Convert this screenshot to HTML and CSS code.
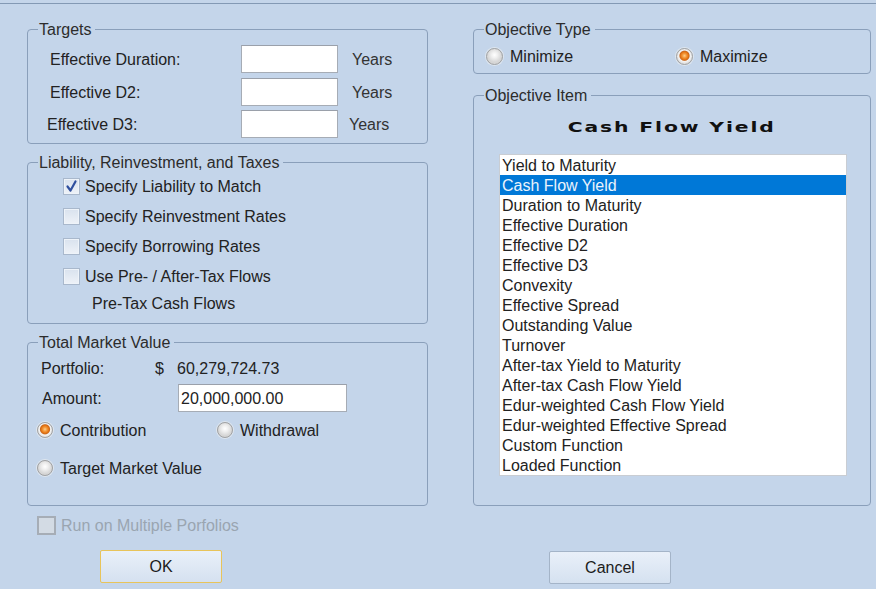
FILE: index.html
```html
<!DOCTYPE html>
<html>
<head>
<meta charset="utf-8">
<link rel="stylesheet" href="styles.css">
</head>
<body>
<div class="frame">
  <div class="content">
    <div class="col col-left">
      <div class="group g-targets">
        <span class="legend">Targets</span>
        <div class="trow r1"><span class="tlabel txt">Effective Duration:</span><div class="field tfield"></div><span class="unit txt">Years</span></div>
        <div class="trow r2"><span class="tlabel txt">Effective D2:</span><div class="field tfield"></div><span class="unit txt">Years</span></div>
        <div class="trow r3"><span class="tlabel txt shift">Effective D3:</span><div class="field tfield"></div><span class="unit txt shift-u">Years</span></div>
      </div>

      <div class="group g-liab">
        <span class="legend">Liability, Reinvestment, and Taxes</span>
        <div class="crow"><span class="check checked"><svg viewBox="0 0 17 17" width="17" height="17"><path d="M4.5 8.5 L7.5 12.5 L12.5 3.5" fill="none" stroke="#2f4f9e" stroke-width="2.2" stroke-linecap="round" stroke-linejoin="round"/></svg></span><span class="txt">Specify Liability to Match</span></div>
        <div class="crow"><span class="check"></span><span class="txt">Specify Reinvestment Rates</span></div>
        <div class="crow"><span class="check"></span><span class="txt">Specify Borrowing Rates</span></div>
        <div class="crow"><span class="check"></span><span class="txt">Use Pre- / After-Tax Flows</span></div>
        <div class="pretax">Pre-Tax Cash Flows</div>
      </div>

      <div class="group g-tmv">
        <span class="legend">Total Market Value</span>
        <div class="prow"><span class="plabel txt">Portfolio:</span><span class="dollar txt">$</span><span class="txt">60,279,724.73</span></div>
        <div class="arow"><span class="alabel txt">Amount:</span><div class="field afield">20,000,000.00</div></div>
        <div class="rrow r-contrib">
          <span class="ropt w180"><span class="radio on"></span><span class="txt">Contribution</span></span>
          <span class="ropt"><span class="radio"></span><span class="txt">Withdrawal</span></span>
        </div>
        <div class="rrow r-target">
          <span class="ropt"><span class="radio"></span><span class="txt">Target Market Value</span></span>
        </div>
      </div>

      <div class="runrow"><span class="check disabled"></span><span class="txt">Run on Multiple Porfolios</span></div>
      <div class="btn btn-ok">OK</div>
    </div>

    <div class="col col-right">
      <div class="group g-otype">
        <span class="legend">Objective Type</span>
        <div class="orow">
          <span class="ropt w190"><span class="radio big"></span><span class="txt">Minimize</span></span>
          <span class="ropt"><span class="radio big on"></span><span class="txt">Maximize</span></span>
        </div>
      </div>

      <div class="group g-oitem">
        <span class="legend">Objective Item</span>
        <div class="otitle"><span class="otitle-text">Cash Flow Yield</span></div>
        <div class="list">
          <div class="item">Yield to Maturity</div>
          <div class="item sel">Cash Flow Yield</div>
          <div class="item">Duration to Maturity</div>
          <div class="item">Effective Duration</div>
          <div class="item">Effective D2</div>
          <div class="item">Effective D3</div>
          <div class="item">Convexity</div>
          <div class="item">Effective Spread</div>
          <div class="item">Outstanding Value</div>
          <div class="item">Turnover</div>
          <div class="item">After-tax Yield to Maturity</div>
          <div class="item">After-tax Cash Flow Yield</div>
          <div class="item">Edur-weighted Cash Flow Yield</div>
          <div class="item">Edur-weighted Effective Spread</div>
          <div class="item">Custom Function</div>
          <div class="item">Loaded Function</div>
        </div>
      </div>

      <div class="btn btn-cancel">Cancel</div>
    </div>
  </div>
</div>
</body>
</html>
```

FILE: styles.css
```css
* { box-sizing: border-box; }
html, body { margin: 0; padding: 0; background: #ffffff; }
body {
  font-family: "Liberation Sans", Arial, sans-serif;
  font-size: 16px;
  color: #222222;
  width: 876px;
  height: 592px;
  overflow: hidden;
}
.frame {
  width: 876px;
  height: 589px;
  background: #c4d5ea;
  padding-top: 3px;
}
.content {
  border-top: 1px solid #8399b4;
  display: grid;
  grid-template-columns: 401px 398px;
  column-gap: 45px;
  padding: 25px 0 0 27px;
}
.col { display: flex; flex-direction: column; }
.txt { padding-top: 2px; }

.group {
  position: relative;
  border: 1px solid #8a9fba;
  border-radius: 4px;
}
.legend {
  position: absolute;
  top: -10px;
  left: 10px;
  line-height: 18px;
  padding: 1px 4px 0 1px;
  background: #c4d5ea;
  color: #2c2c2c;
  white-space: nowrap;
}

/* Targets */
.g-targets { height: 115px; padding: 15px 0 0 22px; }
.trow { display: flex; align-items: center; height: 28px; }
.trow.r2 { margin-top: 5px; }
.trow.r3 { margin-top: 4px; }
.tlabel { width: 191px; }
.tlabel.shift { margin-left: -3px; width: 194px; }
.field {
  background: #ffffff;
  border: 1px solid #a6acb5;
  border-top-color: #9aa0aa;
  height: 28px;
}
.tfield { width: 97px; }
.unit { margin-left: 14px; color: #333333; }
.unit.shift-u { margin-left: 11px; }

/* Liability */
.g-liab { height: 162px; margin-top: 18px; padding-top: 8px; }
.crow { display: flex; align-items: center; height: 30px; padding-left: 35px; }
.check {
  width: 17px;
  height: 17px;
  border: 1px solid #a9b8cc;
  background: linear-gradient(#d9e2ee, #eef2f8);
  box-shadow: inset 0 0 0 1px #eef3f9;
  margin-right: 5px;
  flex: none;
  display: flex;
}
.check svg { margin: -1px; }
.pretax { height: 26px; line-height: 26px; padding: 0 0 0 64px; }

/* Total market value */
.g-tmv { height: 164px; margin-top: 18px; padding-top: 14px; }
.prow { display: flex; align-items: center; height: 22px; padding-left: 13px; }
.plabel { width: 114px; }
.dollar { width: 22px; }
.arow { display: flex; align-items: center; height: 28px; margin-top: 5px; padding-left: 14px; }
.alabel { width: 136px; }
.afield { width: 169px; padding: 1px 0 0 2px; line-height: 26px; }
.rrow { display: flex; align-items: center; height: 20px; padding-left: 9px; }
.r-contrib { margin-top: 8px; }
.r-target { margin-top: 18px; }
.ropt { display: flex; align-items: center; }
.w180 { width: 180px; }
.w190 { width: 190px; }
.radio {
  width: 16px;
  height: 16px;
  border-radius: 50%;
  border: 1px solid #a2a2a2;
  background: radial-gradient(circle at 50% 40%, #ffffff 0, #f0f0f0 3px, #d6d6d6 7px);
  box-shadow: 0 0 0 1px #dfe6ee;
  margin-right: 7px;
  flex: none;
}
.radio.big { width: 17px; height: 17px; }
.radio.on {
  background: radial-gradient(circle at 50% 45%, #ffd08a 0, #f49a3c 2px, #e3700e 4px, #c86a20 4.6px, #f4f4f4 5.6px, #dcdcdc 8px);
}

.runrow { display: flex; align-items: center; height: 20px; margin-top: 9px; padding-left: 10px; color: #9aa5b1; }
.check.disabled {
  width: 19px;
  height: 19px;
  border: 2px solid #a6adb6;
  background: #d3dbe4;
  box-shadow: none;
}

.btn {
  width: 122px;
  height: 33px;
  line-height: 31px;
  text-align: center;
  border: 1px solid #a4b4c8;
  border-radius: 2px;
  background: linear-gradient(#e9f0f9, #d5e1f0);
  color: #1c1c1c;
}
.btn-ok { margin-top: 15px; margin-left: 73px; border-color: #e8c45a; }
.btn-cancel { margin-top: 45px; margin-left: 76px; }

/* Right column */
.g-otype { height: 45px; padding: 16px 0 0 12px; }
.orow { display: flex; align-items: center; height: 20px; }
.g-oitem { height: 411px; margin-top: 21px; padding-top: 21px; }
.otitle { height: 20px; line-height: 20px; text-align: center; margin-bottom: 17px; }
.otitle-text {
  display: inline-block;
  font-family: "DejaVu Sans", sans-serif;
  font-weight: bold;
  font-size: 14px;
  letter-spacing: 1.3px;
  color: #111111;
  transform: scaleX(1.45);
}
.list {
  margin-left: 25px;
  width: 348px;
  background: #ffffff;
  border: 1px solid #c9cdd3;
}
.item { height: 20px; line-height: 18px; padding: 2px 0 0 2px; white-space: nowrap; }
.item.sel { background: #0078d7; color: #eaf3fc; }
```
